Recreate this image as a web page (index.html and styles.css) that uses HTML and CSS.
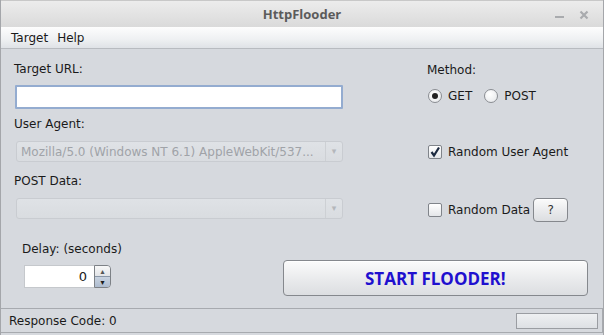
FILE: index.html
```html
<!DOCTYPE html>
<html lang="en">
<head>
  <meta charset="UTF-8">
  <title>HttpFlooder</title>
  <link rel="stylesheet" href="styles.css">
</head>
<body>
<div class="window">
  <!-- Title bar -->
  <div class="titlebar">
    <span class="title">HttpFlooder</span>
    <div class="wm-buttons">
      <span class="wm-min"></span>
      <svg class="wm-close" width="10" height="10" viewBox="0 0 10 10">
        <path d="M1.5 1.5 L8.5 8.5 M8.5 1.5 L1.5 8.5" stroke="#a9abae" stroke-width="2.2"/>
      </svg>
    </div>
  </div>

  <!-- Menu bar -->
  <div class="menubar">
    <span class="menu-item">Target</span>
    <span class="menu-item">Help</span>
  </div>

  <div class="content">
    <div class="form">
      <div class="left-col">
        <label class="label label-url">Target URL:</label>
        <input class="text-field" type="text">

        <label class="label label-ua">User Agent:</label>
        <div class="combo disabled">
          <span class="combo-text">Mozilla/5.0 (Windows NT 6.1) AppleWebKit/537...</span>
          <span class="combo-arrow">&#9662;</span>
        </div>

        <label class="label label-post">POST Data:</label>
        <div class="combo disabled">
          <span class="combo-text"></span>
          <span class="combo-arrow">&#9662;</span>
        </div>
      </div>

      <div class="right-col">
        <label class="label label-method">Method:</label>
        <div class="radio-row">
          <span class="radio checked"></span><span class="opt-text">GET</span>
          <span class="radio"></span><span class="opt-text">POST</span>
        </div>

        <div class="check-row check-ua">
          <span class="checkbox checked">
            <svg width="12" height="12" viewBox="0 0 12 12">
              <path d="M2.5 6 L5 9.5 L10 1.5" fill="none" stroke="#1c2a40" stroke-width="2.2"/>
            </svg>
          </span>
          <span class="opt-text">Random User Agent</span>
        </div>

        <div class="check-row check-data">
          <span class="checkbox"></span>
          <span class="opt-text">Random Data</span>
          <button class="btn btn-help">?</button>
        </div>
      </div>
    </div>

    <div class="bottom-row">
      <div class="delay">
        <label class="label">Delay: (seconds)</label>
        <div class="spinner">
          <span class="spinner-value">0</span>
          <div class="spinner-arrows">
            <span class="spin-up">&#9652;</span>
            <span class="spin-down">&#9662;</span>
          </div>
        </div>
      </div>
      <button class="btn btn-start">START FLOODER!</button>
    </div>
  </div>

  <!-- Status bar -->
  <div class="statusbar">
    <span class="status-text">Response Code: 0</span>
    <div class="progress"></div>
  </div>
</div>
</body>
</html>
```

FILE: styles.css
```css
/* Window frame */
html, body {
  margin: 0;
  padding: 0;
}

body {
  width: 604px;
  height: 335px;
  overflow: hidden;
  background: #d6d9de;
  font-family: "DejaVu Sans", sans-serif;
  font-size: 12px;
  color: #1a1a1a;
}

.window {
  display: flex;
  flex-direction: column;
  height: 335px;
  box-sizing: border-box;
  border-left: 1px solid #a4a6aa;
  border-right: 1px solid #a4a6aa;
  background: #d6d9de;
}

.titlebar {
  position: relative;
  height: 27px;
  display: flex;
  align-items: center;
  justify-content: center;
  background: linear-gradient(#ececec, #dadada);
  border-top: 1px solid #c8c8c8;
  box-sizing: border-box;
}

.title {
  font-family: "Open Sans", sans-serif;
  font-weight: bold;
  font-size: 13px;
  color: #5b5b5b;
}

.wm-buttons {
  position: absolute;
  right: 14px;
  top: 9px;
  display: flex;
  align-items: center;
  gap: 15px;
}

.wm-min {
  width: 9px;
  height: 2px;
  margin-top: 4px;
  background: #a9abae;
}

/* Menu bar */
.menubar {
  height: 21px;
  display: flex;
  align-items: center;
  padding-left: 10px;
  gap: 9px;
  background: linear-gradient(#fdfdfd, #eef0f2 60%, #dfe2e6);
  border-bottom: 1px solid #b8bbc0;
}

.menu-item {
  color: #1a1a1a;
}

/* Main form */
.content {
  flex: 1;
  display: flex;
  flex-direction: column;
}

.form {
  display: flex;
  padding: 12px 0 0 13px;
}

.left-col {
  width: 330px;
  display: flex;
  flex-direction: column;
}

.right-col {
  margin-left: 82px;
  display: flex;
  flex-direction: column;
}

.label {
  display: block;
  line-height: 16px;
  height: 16px;
}

.label-url {
  margin-bottom: 8px;
}

.label-ua {
  margin: 7px 0 9px;
}

.label-post {
  margin: 11px 0 9px;
}

.text-field {
  margin: 0 0 0 1px;
  width: 328px;
  height: 24px;
  box-sizing: border-box;
  border: 2px solid #94acd0;
  border-radius: 1px;
  background: #fff;
  outline: none;
}

.combo {
  margin-left: 2px;
  width: 327px;
  height: 21px;
  box-sizing: border-box;
  display: flex;
  align-items: center;
  border: 1px solid #c9ccd1;
  border-radius: 3px;
  background: linear-gradient(#dfe2e6, #d9dce0);
}

.combo-text {
  flex: 1;
  padding-left: 4px;
  color: #a0a3a8;
  white-space: nowrap;
  overflow: hidden;
}

.combo-arrow {
  width: 16px;
  height: 19px;
  border-left: 1px solid #cdd0d4;
  color: #b4b7bb;
  font-size: 9px;
  text-align: center;
  line-height: 19px;
}

/* Right column options */
.label-method {
  margin: 1px 0 0 1px;
}

.radio-row {
  display: flex;
  align-items: center;
  margin: 10px 0 0 2px;
  height: 16px;
}

.radio {
  width: 12px;
  height: 12px;
  border-radius: 50%;
  border: 1px solid #8a8d92;
  background: radial-gradient(circle at 40% 35%, #ffffff, #e3e5e8);
  box-sizing: content-box;
  position: relative;
}

.radio.checked::after {
  content: "";
  position: absolute;
  left: 3px;
  top: 3px;
  width: 6px;
  height: 6px;
  border-radius: 50%;
  background: #222;
}

.opt-text {
  margin-left: 6px;
}

.radio-row .opt-text {
  margin-right: 12px;
}

.check-row {
  display: flex;
  align-items: center;
  margin-left: 2px;
}

.check-ua {
  margin-top: 40px;
  height: 16px;
}

.check-data {
  margin-top: 38px;
  height: 24px;
}

.checkbox {
  width: 12px;
  height: 12px;
  border: 1px solid #80848a;
  border-radius: 2px;
  background: linear-gradient(#ffffff, #e4e6e9);
  display: flex;
  align-items: center;
  justify-content: center;
}

.checkbox svg {
  margin-top: -1px;
}

.btn {
  font-family: "DejaVu Sans", sans-serif;
  border: 1px solid #85888d;
  border-radius: 4px;
  background: linear-gradient(#fbfbfb, #e9eaec 55%, #dcdee1);
  box-shadow: inset 0 1px 0 #fff;
  padding: 0;
  cursor: pointer;
}

.btn-help {
  margin-left: 3px;
  width: 35px;
  height: 24px;
  font-size: 12px;
  color: #333;
}

/* Delay spinner and start button */
.bottom-row {
  display: flex;
  align-items: flex-start;
  margin-top: 19px;
}

.delay {
  margin-left: 21px;
  display: flex;
  flex-direction: column;
}

.spinner {
  margin: 8px 0 0 2px;
  display: flex;
  height: 23px;
  width: 87px;
}

.spinner-value {
  width: 70px;
  box-sizing: border-box;
  background: #fff;
  border: 1px solid #c5c8cc;
  border-right: none;
  text-align: right;
  padding-right: 7px;
  line-height: 21px;
  font-size: 13px;
}

.spinner-arrows {
  width: 17px;
  display: flex;
  flex-direction: column;
  border: 1px solid #7d8186;
  border-radius: 0 4px 4px 0;
  overflow: hidden;
  box-sizing: border-box;
}

.spinner-arrows span {
  flex: 1;
  display: flex;
  align-items: center;
  justify-content: center;
  font-size: 8px;
  color: #555;
}

.spin-up {
  background: linear-gradient(#f8f8f8, #e2e4e7);
  color: #8a8d92;
}

.spin-down {
  background: linear-gradient(#c9d3e0, #aebccf);
  border-top: 1px solid #8a97a8;
  color: #1a1a1a !important;
}

.btn-start {
  margin: 19px 0 0 161px;
  width: 305px;
  height: 36px;
  font-family: "Open Sans", sans-serif;
  font-weight: bold;
  font-size: 17px;
  color: #1f10cf;
}

/* Status bar */
.statusbar {
  height: 23px;
  margin-bottom: 2px;
  display: flex;
  align-items: center;
  justify-content: space-between;
  padding: 0 4px 0 8px;
  border-top: 1px solid #a7aaaf;
  border-bottom: 1px solid #a7aaaf;
  border-right: 1px solid #a7aaaf;
  background: #d6d9de;
}

.progress {
  width: 82px;
  height: 16px;
  box-sizing: border-box;
  border: 1px solid #9a9da2;
  background: linear-gradient(#eef0f2, #dde0e4);
}
```
